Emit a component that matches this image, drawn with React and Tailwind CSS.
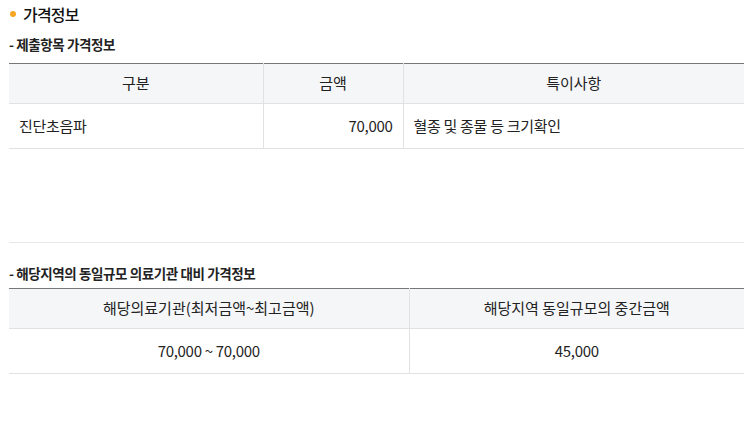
import React from 'react';

const font = { fontFamily: '"Noto Sans CJK KR", "Noto Sans", sans-serif' };

const rows1 = [{ name: '진단초음파', price: '70,000', note: '혈종 및 종물 등 크기확인' }];

export default function App() {
  return (
    <div className="w-[755px] h-[442px] bg-white text-[#222] pl-[9px] pr-[11px]" style={font}>
      {/* 가격정보 제목 */}
      <div className="flex items-center h-[30px] pb-[3px]">
        <span className="w-[6px] h-[6px] rounded-full bg-[#f5a623] ml-[1px] mr-[7px]"></span>
        <h2 className="text-[16px] font-medium text-[#111] tracking-[-0.8px]">가격정보</h2>
      </div>

      <p className="text-[13.5px] font-bold text-[#222] tracking-[-0.4px] h-[22px] leading-[22px] mt-[3px] mb-[8px]">- 제출항목 가격정보</p>

      <div className="h-[180px] border-b border-[#e8e8e8]">
        <table className="w-full border-collapse table-fixed text-[15px]">
          <colgroup>
            <col className="w-[254px]" />
            <col className="w-[140px]" />
            <col />
          </colgroup>
          <thead>
            <tr className="h-[40px] bg-[#f5f6f8] border-t-[1.5px] border-[#777]">
              <th className="font-normal border-b border-r border-[#e2e2e2]">구분</th>
              <th className="font-normal border-b border-r border-[#e2e2e2]">금액</th>
              <th className="font-normal border-b border-[#e2e2e2]">특이사항</th>
            </tr>
          </thead>
          <tbody>
            {rows1.map((r) => (
              <tr key={r.name} className="h-[45px]">
                <td className="pl-[10px] border-b border-r border-[#e2e2e2] tracking-[-0.3px]">{r.name}</td>
                <td className="pr-[10px] text-right border-b border-r border-[#e2e2e2] tracking-[-0.3px]">{r.price}</td>
                <td className="pl-[10px] border-b border-[#e2e2e2] tracking-[-0.3px]">{r.note}</td>
              </tr>
            ))}
          </tbody>
        </table>
      </div>

      <p className="text-[13.5px] font-bold text-[#222] tracking-[-0.4px] h-[22px] leading-[22px] mt-[19px] mb-[4px]">- 해당지역의 동일규모 의료기관 대비 가격정보</p>

      <table className="w-full border-collapse table-fixed text-[15px]">
        <colgroup>
          <col className="w-[400px]" />
          <col />
        </colgroup>
        <thead>
          <tr className="h-[40px] bg-[#f5f6f8] border-t-[1.5px] border-[#777]">
            <th className="font-normal border-b border-r border-[#e2e2e2]">해당의료기관(최저금액~최고금액)</th>
            <th className="font-normal border-b border-[#e2e2e2]">해당지역 동일규모의 중간금액</th>
          </tr>
        </thead>
        <tbody>
          <tr className="h-[45px]">
            <td className="text-center border-b border-r border-[#e2e2e2] tracking-[-0.3px]">70,000 ~ 70,000</td>
            <td className="text-center border-b border-[#e2e2e2] tracking-[-0.3px]">45,000</td>
          </tr>
        </tbody>
      </table>
    </div>
  );
}
